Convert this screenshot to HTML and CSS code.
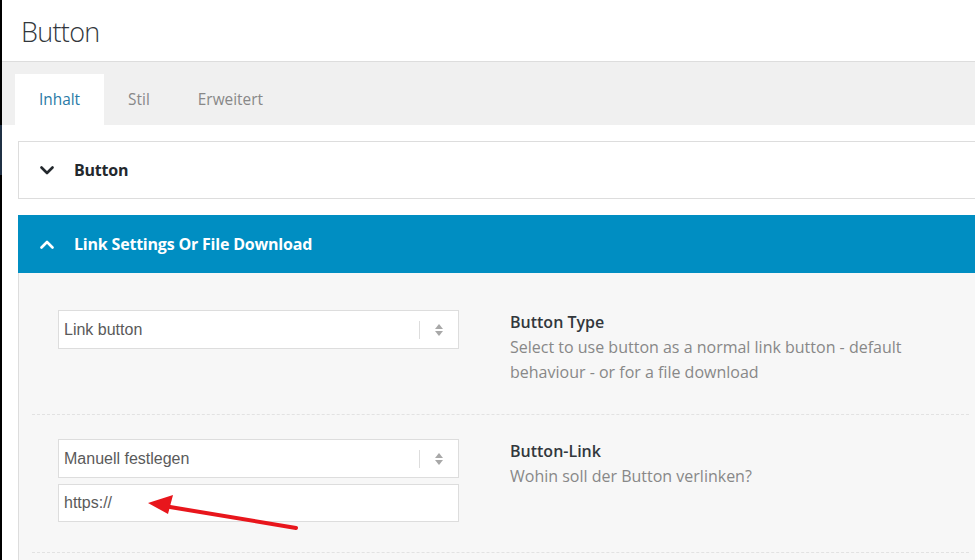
FILE: index.html
```html
<!DOCTYPE html>
<html lang="de">
<head>
<meta charset="utf-8">
<title>Button</title>
<link rel="stylesheet" href="styles.css">
</head>
<body>
<div class="app">
  <div class="edge"></div>
  <div class="main">
    <header class="header">
      <h1 class="title">Button</h1>
    </header>
    <nav class="tabs">
      <div class="tab active">Inhalt</div>
      <div class="tab">Stil</div>
      <div class="tab">Erweitert</div>
    </nav>
    <div class="content">
      <section class="panel">
        <div class="panel-head">
          <svg class="chev" width="14" height="9" viewBox="0 0 14 9"><path d="M1.5 1.5 L7 7 L12.5 1.5" fill="none" stroke="#23282d" stroke-width="2.6" stroke-linecap="round" stroke-linejoin="round"/></svg>
          <span class="panel-title">Button</span>
        </div>
      </section>
      <section class="panel open">
        <div class="panel-head">
          <svg class="chev" width="14" height="9" viewBox="0 0 14 9"><path d="M1.5 7.5 L7 2 L12.5 7.5" fill="none" stroke="#ffffff" stroke-width="2.6" stroke-linecap="round" stroke-linejoin="round"/></svg>
          <span class="panel-title">Link Settings Or File Download</span>
        </div>
        <div class="panel-body">
          <div class="row">
            <div class="field">
              <div class="select">
                <span class="select-value">Link button</span>
                <span class="select-sep"></span>
                <span class="select-arrows"><span class="up"></span><span class="down"></span></span>
              </div>
            </div>
            <div class="info">
              <div class="info-title">Button Type</div>
              <div class="info-desc">Select to use button as a normal link button - default behaviour - or for a file download</div>
            </div>
          </div>
          <div class="row">
            <div class="field">
              <div class="select">
                <span class="select-value">Manuell festlegen</span>
                <span class="select-sep"></span>
                <span class="select-arrows"><span class="up"></span><span class="down"></span></span>
              </div>
              <div class="input">https://</div>
            </div>
            <div class="info">
              <div class="info-title">Button-Link</div>
              <div class="info-desc">Wohin soll der Button verlinken?</div>
            </div>
          </div>
        </div>
      </section>
    </div>
    <svg class="annotation" width="160" height="40" viewBox="0 0 160 40">
      <line x1="148" y1="30" x2="22" y2="9" stroke="#e8161c" stroke-width="4" stroke-linecap="round"/>
      <polygon points="0,5 25,-3 20,16" fill="#e8161c"/>
    </svg>
  </div>
</div>
</body>
</html>
```

FILE: styles.css
```css
html, body {
  margin: 0;
  padding: 0;
  height: 100%;
  overflow: hidden;
}
body {
  background: #ffffff;
  font-family: "Open Sans", "Noto Sans", sans-serif;
  color: #32373c;
}
.app {
  display: flex;
  height: 560px;
}
.edge {
  width: 2px;
  flex: none;
  background: linear-gradient(to bottom, #000 0, #000 125px, #1f3044 125px, #1f3044 175px, #000 175px);
}
.main {
  flex: 1;
  position: relative;
  overflow: hidden;
}
.header {
  height: 61px;
  border-bottom: 1px solid #dddddd;
  display: flex;
  align-items: center;
  padding-left: 19px;
}
.title {
  margin: 0;
  font-weight: 300;
  font-size: 27px;
  letter-spacing: -0.7px;
  color: #32373c;
  line-height: 1;
  padding-top: 2px;
}
.tabs {
  height: 63px;
  background: #f0f0f0;
  display: flex;
  align-items: flex-end;
  padding-left: 13px;
}
.tab {
  height: 51px;
  line-height: 51px;
  padding: 0 24px;
  font-size: 15.4px;
  color: #888888;
}
.tab.active {
  background: #ffffff;
  color: #2a7aa6;
}
.content {
  padding: 16px 0 0 16px;
}
.panel {
  border: 1px solid #dddddd;
  margin-right: -8px;
  margin-bottom: 16px;
  background: #ffffff;
}
.panel-head {
  height: 56px;
  display: flex;
  align-items: center;
  padding-left: 21px;
}
.chev {
  flex: none;
  display: block;
}
.panel-title {
  margin-left: 20px;
  font-size: 16px;
  font-weight: 700;
  letter-spacing: -0.2px;
  color: #23282d;
}
.panel.open {
  border: none;
}
.panel.open .panel-head {
  height: 58px;
  background: #008ec2;
  padding-left: 22px;
}
.panel.open .panel-title {
  color: #ffffff;
  margin-left: 20px;
}
.panel-body {
  background: #f7f7f7;
  border-left: 1px solid #dddddd;
  padding: 13px 14px 40px 13px;
}
.row {
  display: flex;
  padding: 24px 0 29px 26px;
  border-bottom: 1px dashed #e2e2e2;
}
.row + .row {
  padding-bottom: 30px;
}
.field {
  width: 401px;
  flex: none;
}
.select {
  height: 37px;
  border: 1px solid #dddddd;
  background: #ffffff;
  display: flex;
  align-items: center;
  padding-left: 5px;
  box-sizing: content-box;
}
.select-value {
  flex: 1;
  font-family: "Liberation Sans", Arial, sans-serif;
  font-size: 16px;
  color: #5a5a5a;
}
.select-sep {
  width: 1px;
  height: 18px;
  background: #dddddd;
}
.select-arrows {
  width: 38px;
  display: flex;
  flex-direction: column;
  align-items: center;
  gap: 2px;
  margin-left: 0;
}
.select-arrows .up {
  width: 0;
  height: 0;
  border-left: 4px solid transparent;
  border-right: 4px solid transparent;
  border-bottom: 5px solid #a8a8a8;
}
.select-arrows .down {
  width: 0;
  height: 0;
  border-left: 4px solid transparent;
  border-right: 4px solid transparent;
  border-top: 5px solid #a8a8a8;
}
.input {
  margin-top: 6px;
  height: 36px;
  line-height: 36px;
  border: 1px solid #dddddd;
  background: #ffffff;
  padding-left: 5px;
  font-family: "Liberation Sans", Arial, sans-serif;
  font-size: 16px;
  color: #5a5a5a;
}
.info {
  margin-left: 51px;
  max-width: 440px;
  font-size: 16px;
  line-height: 25px;
  padding-top: 0;
}
.info-title {
  font-weight: 600;
  color: #32373c;
}
.info-desc {
  color: #888888;
}
.annotation {
  position: absolute;
  left: 146px;
  top: 498px;
  overflow: visible;
}
```
